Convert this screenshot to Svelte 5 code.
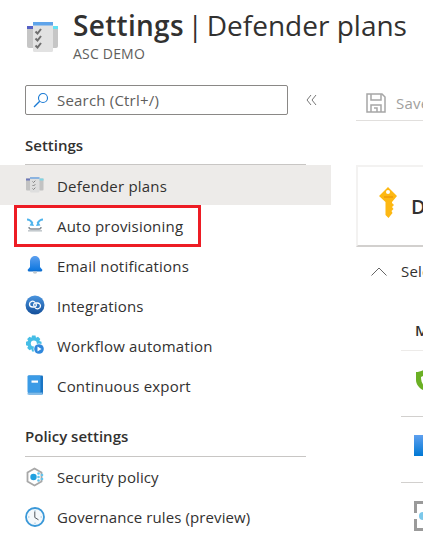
<script>
	const groups = [
		{
			title: 'Settings',
			items: [
				{ id: 'plans', label: 'Defender plans', active: true },
				{ id: 'auto', label: 'Auto provisioning', marked: true },
				{ id: 'email', label: 'Email notifications' },
				{ id: 'integrations', label: 'Integrations' },
				{ id: 'workflow', label: 'Workflow automation' },
				{ id: 'export', label: 'Continuous export' }
			]
		},
		{
			title: 'Policy settings',
			items: [
				{ id: 'policy', label: 'Security policy' },
				{ id: 'rules', label: 'Governance rules (preview)' }
			]
		}
	];
</script>

{#snippet icon(id)}
	<svg class="nav-icon" viewBox="0 0 20 20" aria-hidden="true">
		{#if id === 'plans'}
			<rect x="1" y="3.500" width="5" height="12" rx="1" fill="#c2c2c2" />
			<rect x="14" y="3.500" width="4.500" height="12" rx="1" fill="#c2c2c2" />
			<rect x="1" y="3.500" width="5" height="2" fill="#6d78b8" />
			<rect x="14" y="3.500" width="4.500" height="2" fill="#7fd4e4" />
			<rect x="5" y="2" width="9.500" height="15.500" rx="1" fill="#dedede" />
			<rect x="5" y="2" width="9.500" height="2" fill="#8cb4e0" />
			<path d="M7.500 6.500l1 1 1.800-1.800M7.500 10l1 1 1.800-1.800M7.500 13.500l1 1 1.800-1.800" fill="none" stroke="#808080" stroke-width="1" />
		{:else if id === 'auto'}
			<path d="M2 4.500c2 0 4 1 5.500 4M18 4.500c-2 0-4 1-5.500 4" fill="none" stroke="#50b4ec" stroke-width="2" />
			<path d="M4.500 10.500l4.500.500L7 6.500zM15.500 10.500L11 11l2-4.500z" fill="#50b4ec" />
			<path d="M4 12c0 1.500 1 2 2 2h8c1 0 2-.5 2-2" fill="none" stroke="#868f96" stroke-width="1.400" />
			<rect x="3" y="15" width="14" height="1.600" fill="#c4cace" />
		{:else if id === 'email'}
			<defs>
				<linearGradient id="bell" x1="0" y1="0" x2="0" y2="1">
					<stop offset="0" stop-color="#5ea0ef" />
					<stop offset="1" stop-color="#0f78e0" />
				</linearGradient>
			</defs>
			<path d="M10 1C6.800 1 5 3.500 5 6.500V12l-2.500 3h15L15 12V6.500C15 3.500 13.200 1 10 1z" fill="url(#bell)" />
			<path d="M2.500 15h15l-1 1.500h-13z" fill="#0f6fd0" />
			<path d="M7.800 16.500h4.400a2.200 2.200 0 0 1-4.400 0z" fill="#c3c9ce" />
		{:else if id === 'integrations'}
			<defs>
				<linearGradient id="orb" x1="0" y1="0" x2="0" y2="1">
					<stop offset="0" stop-color="#4a94de" />
					<stop offset="1" stop-color="#134f9a" />
				</linearGradient>
			</defs>
			<circle cx="10" cy="10" r="9.500" fill="url(#orb)" />
			<path d="M10 7.500a3 3 0 0 0-5.500 1.500A3 3 0 0 0 7.500 12H10a2 2 0 0 0 .5-3.500" fill="none" stroke="#fff" stroke-width="1.300" />
			<path d="M10 12.500a3 3 0 0 0 5.500-1.500A3 3 0 0 0 12.500 8H10a2 2 0 0 0-.5 3.500" fill="none" stroke="#fff" stroke-width="1.300" />
		{:else if id === 'workflow'}
			<path d="M7 .5h3.500l.5 2.300 2-1 2.300 2.300-1 2 2.200.7v3.500l-2.200.6 1 2-2.300 2.300-2-1-.5 2.300H7l-.5-2.300-2 1-2.300-2.300 1-2L1 10.300V6.800l2.200-.7-1-2 2.300-2.300 2 1z" fill="#45bde6" />
			<circle cx="8.800" cy="8.500" r="3" fill="#fff" />
			<circle cx="14" cy="14" r="5.500" fill="#fff" />
			<circle cx="14" cy="14" r="4.800" fill="#2f87dc" />
			<path d="M12.500 11.500l4 2.500-4 2.500z" fill="#fff" />
		{:else if id === 'export'}
			<rect x="3" y="0.500" width="15" height="19" rx="1" fill="#1a75c4" />
			<rect x="2.500" y="0.500" width="13" height="17" rx="1" fill="#3b9be6" />
			<rect x="2.500" y="17.500" width="15" height="2" fill="#7fbcea" />
			<rect x="6.500" y="5.500" width="6.500" height="2.200" fill="#fff" />
		{:else if id === 'policy'}
			<path d="M9.500 1.500l7 4v9l-7 4-7-4v-9z" fill="#fff" stroke="#a8a8a8" stroke-width="1.800" />
			<circle cx="8.500" cy="10" r="3.200" fill="#1fa0e0" />
			<circle cx="13.500" cy="6.500" r="1.300" fill="#63c5ee" />
			<circle cx="17" cy="8" r="1.300" fill="#63c5ee" />
			<circle cx="13.500" cy="10" r="1.300" fill="#63c5ee" />
			<circle cx="17" cy="12" r="1.300" fill="#63c5ee" />
			<circle cx="13.500" cy="13.500" r="1.300" fill="#63c5ee" />
		{:else}
			<circle cx="10" cy="10" r="9" fill="#f4f8fb" stroke="#3a98d8" stroke-width="1.800" />
			<path d="M10 3v1.500M10 15.500V17M3 10h1.500M15.500 10H17" stroke="#9cc4de" stroke-width="1" />
			<path d="M9.800 4.500v6l3.700 2.300" fill="none" stroke="#50565c" stroke-width="1" />
		{/if}
	</svg>
{/snippet}

<div class="page">
	<header class="header">
		<svg class="logo" viewBox="0 0 34 30" aria-hidden="true">
			<rect x="2" y="4" width="9" height="22" rx="2" fill="#c6c6c6" />
			<rect x="24" y="4" width="9" height="22" rx="2" fill="#c6c6c6" />
			<rect x="2" y="4" width="7" height="3" fill="#5560c4" />
			<rect x="27" y="4" width="6" height="3" fill="#62e2f4" />
			<rect x="8" y="0" width="20" height="30" rx="1.500" fill="#e2e2e2" />
			<rect x="8" y="0" width="20" height="3.500" fill="#5fa4ea" />
			<path d="M10.500 9.500l2 2 3.500-4.500M10.500 16.500l2 2 3.500-4.500M10.500 23.500l2 2 3.500-4.500" fill="none" stroke="#6e6e6e" stroke-width="2" />
		</svg>
		<div>
			<h1><b>Settings</b><span class="sep">{' | '}</span>Defender plans</h1>
			<p>ASC DEMO</p>
		</div>
	</header>

	<div class="body">
		<nav class="sidebar">
			<div class="search-row">
				<div class="search">
					<svg viewBox="0 0 16 16" aria-hidden="true">
						<circle cx="10" cy="6" r="4.500" fill="none" stroke="#1a7ad4" stroke-width="1.100" />
						<path d="M6.700 9.300L1 15" fill="none" stroke="#1a7ad4" stroke-width="1.300" />
					</svg>
					<span>Search (Ctrl+/)</span>
				</div>
				<svg class="collapse" viewBox="0 0 11 10" aria-hidden="true">
					<path d="M5 0L1 5l4 5M10 0L6 5l4 5" fill="none" stroke="#777" stroke-width="1" />
				</svg>
			</div>

			{#each groups as group}
				<section class="group">
					<h2>{group.title}</h2>
					{#each group.items as item}
						<div class="item" class:active={item.active}>
							{#if item.marked}<span class="marker"></span>{/if}
							{@render icon(item.id)}
							<span class="label">{item.label}</span>
						</div>
					{/each}
				</section>
			{/each}
		</nav>

		<main class="main">
			<div class="toolbar">
				<svg viewBox="0 0 20 20" aria-hidden="true">
					<path d="M1 1h15l3 3v15H1z" fill="none" stroke="#a6a6a6" stroke-width="1.500" />
					<path d="M5 1v6h10V1M5 19v-7h10v7M8 15h3v4" fill="none" stroke="#a6a6a6" stroke-width="1.500" />
				</svg>
				<span>Save</span>
			</div>

			<div class="card">
				<svg viewBox="0 0 20 31" aria-hidden="true">
					<path d="M10 0l9 9-5 6v1l2 2-2 2 1.500 2-2 2 1 2-4 5-3-3V15L1 9z" fill="#fdb813" />
					<path d="M6 9h9v2H6z" fill="#f2a20c" />
					<circle cx="10" cy="5" r="2" fill="#fff" />
				</svg>
				<strong>Defender plans</strong>
			</div>

			<div class="select">
				<svg viewBox="0 0 16 9" aria-hidden="true">
					<path d="M.5 8.500L8 1l7.500 7.500" fill="none" stroke="#666" stroke-width="1" />
				</svg>
				<span>Select</span>
			</div>

			<div class="table">
				<div class="thead">Microsoft</div>
				<div class="row">
					<svg class="shield" viewBox="0 0 20 22" aria-hidden="true">
						<path d="M10 0c3 2 6 3 9 3v8c0 5-4 9-9 11-5-2-9-6-9-11V3c3 0 6-1 9-3z" fill="#6bb024" />
						<path d="M6 8l4-2v11c-2-1-4-4-4-9z" fill="#fff" />
					</svg>
				</div>
				<div class="row">
					<div class="tile"></div>
				</div>
				<div class="row">
					<svg class="bracket" viewBox="0 0 20 30" aria-hidden="true">
						<path d="M12 1.500H1.500V12M1.500 18v10.500H12" fill="none" stroke="#9a9a9a" stroke-width="3" />
						<circle cx="9" cy="15" r="4" fill="#7cc8ea" />
					</svg>
				</div>
			</div>
		</main>
	</div>
</div>

<style>
:global(body) {
	margin: 0;
	background: #fff;
}
.page {
	width: 423px;
	height: 548px;
	overflow: hidden;
	font-family: "Open Sans", "Noto Sans", sans-serif;
	color: #323130;
}
.header {
	display: flex;
	height: 70px;
	padding: 0 0 0 25px;
	box-sizing: border-box;
	white-space: nowrap;
}
.logo {
	width: 34px;
	height: 30px;
	margin-top: 22px;
	margin-right: 14px;
	flex-shrink: 0;
}
h1 {
	margin: 6px 0 0;
	font-size: 28px;
	line-height: 38px;
	font-weight: 400;
}
h1 b {
	font-weight: 600;
	letter-spacing: .3px;
}
.sep {
	word-spacing: -3.500px;
}
.header p {
	margin: 1px 0 0;
	font-size: 14px;
	line-height: 18px;
	letter-spacing: .2px;
	color: #605e5c;
}
.body {
	display: flex;
}
.sidebar {
	width: 331px;
	flex-shrink: 0;
	font-size: 15px;
	letter-spacing: .2px;
}
.search-row {
	display: flex;
	align-items: center;
	padding: 15px 0 0 25px;
}
.search {
	width: 263px;
	height: 30px;
	box-sizing: border-box;
	display: flex;
	align-items: center;
	gap: 8px;
	padding-left: 7px;
	border: 1px solid #8a8886;
	border-radius: 2px;
	color: #605e5c;
}
.search svg {
	width: 16px;
	height: 16px;
}
.collapse {
	width: 11px;
	height: 10px;
	margin-left: 18px;
}
.group {
	padding-top: 21px;
}
.group + .group {
	padding-top: 22px;
}
.group h2 {
	margin: 0 25px;
	height: 28px;
	font-size: 15px;
	line-height: 18px;
	font-weight: 600;
	letter-spacing: 0;
	border-bottom: 1px solid #c8c6c4;
}
.group + .group h2 {
	height: 29px;
}
.item {
	position: relative;
	height: 40px;
	display: flex;
	align-items: center;
	gap: 12px;
	padding-left: 25px;
}
.item.active {
	background: #edebe9;
}
.label {
	padding-top: 2px;
}
.group + .group .label {
	padding-top: 0;
	letter-spacing: .1px;
}
.nav-icon {
	width: 20px;
	height: 20px;
	flex-shrink: 0;
}
.marker {
	position: absolute;
	left: 14px;
	top: 0;
	width: 181px;
	height: 36px;
	border: 3px solid #ed1c24;
}
.main {
	flex: none;
	width: 400px;
	padding-left: 25px;
}
.toolbar {
	height: 51px;
	box-sizing: border-box;
	display: flex;
	align-items: center;
	gap: 10px;
	padding: 15px 0 0 10px;
	border-bottom: 1px solid #e1dfdd;
	color: #a19f9d;
	font-size: 15px;
	letter-spacing: .2px;
}
.toolbar svg {
	width: 20px;
	height: 20px;
}
.card {
	display: flex;
	align-items: center;
	gap: 13px;
	margin-top: 44px;
	height: 82px;
	box-sizing: border-box;
	padding-left: 20px;
	border: 2px solid #f3f2f1;
	border-bottom-color: #d2d0ce;
}
.card svg {
	width: 20px;
	height: 31px;
	margin-bottom: 7px;
}
.card strong {
	font-size: 20px;
	font-weight: 600;
}
.select {
	display: flex;
	align-items: center;
	gap: 14px;
	height: 48px;
	padding-left: 15px;
	font-size: 15px;
	letter-spacing: .2px;
}
.select svg {
	width: 16px;
	height: 9px;
}
.table {
	margin-left: 45px;
}
.thead {
	height: 56px;
	padding: 25px 0 0 14px;
	box-sizing: border-box;
	font-size: 15px;
	font-weight: 600;
	border-bottom: 1px solid #edebe9;
}
.row {
	padding: 18px 0 0 13px;
	height: 47px;
	border-bottom: 1px solid #d2d0ce;
}
.shield {
	display: block;
	width: 20px;
	height: 22px;
	margin-left: 1px;
}
.tile {
	width: 30px;
	height: 21px;
	background: linear-gradient(#5ea0ef, #0078d4);
}
.bracket {
	display: block;
	width: 20px;
	height: 30px;
}
</style>
